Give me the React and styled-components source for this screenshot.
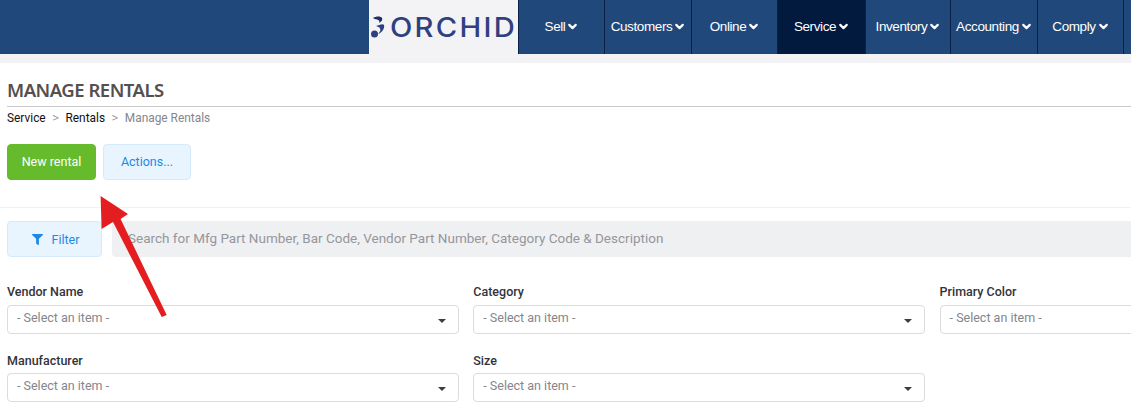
import React from 'react'
import styled, { createGlobalStyle } from 'styled-components'
import { FaFilter } from 'react-icons/fa'
import { ChevronDown } from 'lucide-react'

const GlobalStyle = createGlobalStyle`
  html, body {
    margin: 0;
    padding: 0;
    background: #fff;
    overflow: hidden;
    font-family: Roboto, "Liberation Sans", sans-serif;
  }
  * {
    box-sizing: border-box;
  }
`

const Page = styled.div`
  position: relative;
  width: 1131px;
  height: 419px;
  overflow: hidden;
`

const TopBar = styled.header`
  display: flex;
  height: 54px;
  padding-left: 369px;
  background: #21487a;
`

const LogoBox = styled.div`
  display: flex;
  align-items: center;
  width: 149px;
  padding-left: 2px;
  background: #f3f3f5;
`

const LogoText = styled.span`
  margin-left: -1px;
  font-family: Inter, "Liberation Sans", sans-serif;
  font-size: 27px;
  font-weight: 500;
  letter-spacing: 2.1px;
  color: #2f4080;
  transform: scaleX(1.08);
  transform-origin: left center;
`

const Nav = styled.nav`
  display: flex;
`

const NavItem = styled.div`
  display: flex;
  align-items: center;
  justify-content: center;
  gap: 1px;
  width: ${p => p.$width}px;
  padding: 0 0 2px 1px;
  border-left: 1px solid #0b2148;
  background: ${p => (p.$active ? '#011a3e' : 'transparent')};
  font-family: "Liberation Sans", sans-serif;
  font-size: 13.5px;
  letter-spacing: -0.4px;
  color: #fff;

  svg {
    width: 13px;
    height: 13px;
    stroke-width: 4;
  }
`

const Strip = styled.div`
  height: 9px;
  background: #f3f3f5;
`

const Content = styled.main`
  padding: 14px 0 0 7px;
`

const Title = styled.h1`
  margin: 0;
  height: 30px;
  border-bottom: 1px solid #c9c9c9;
  font-family: "Noto Sans", sans-serif;
  font-size: 18.5px;
  font-weight: 600;
  line-height: 25px;
  letter-spacing: -0.5px;
  color: #55504f;
`

const Crumbs = styled.div`
  display: flex;
  align-items: center;
  gap: 6.5px;
  height: 21px;
  font-size: 11.9px;
`

const Crumb = styled.span`
  color: ${p => (p.$current ? '#85858c' : '#111')};
`

const CrumbSep = styled.span`
  font-size: 13px;
  font-weight: 300;
  color: #8a8a8a;
`

const ButtonRow = styled.div`
  display: flex;
  gap: 7px;
  margin-top: 16px;
`

const Button = styled.div`
  display: flex;
  align-items: center;
  justify-content: center;
  gap: 9px;
  width: ${p => p.$width}px;
  height: 36px;
  padding: ${p => p.$pad};
  border: 1px solid ${p => (p.$primary ? '#65bb2b' : '#d5ebfc')};
  border-radius: 4px;
  background: ${p => (p.$primary ? '#65bb2b' : '#e9f5fe')};
  font-size: 12.5px;
  color: ${p => (p.$primary ? '#fff' : '#1e88e5')};

  svg {
    width: 11px;
    height: 11px;
  }
`

const Divider = styled.div`
  height: 1px;
  margin: 27px 0 13px -7px;
  background: #f2f2f4;
`

const SearchRow = styled.div`
  display: flex;
  gap: 10px;
`

const SearchBox = styled.div`
  display: flex;
  align-items: center;
  flex: 1;
  height: 36px;
  padding: 0 0 2px 16px;
  border-radius: 4px 0 0 4px;
  background: #eff0f2;
  font-size: 13.5px;
  color: #96969c;
`

const FilterGrid = styled.div`
  display: grid;
  grid-template-columns: 452px 452px 452px;
  column-gap: 14.3px;
  row-gap: 18px;
  margin-top: 26px;
`

const Field = styled.div`
  display: flex;
  flex-direction: column;
  gap: 5px;

  &:nth-child(n + 4) {
    gap: 4px;
  }
`

const Label = styled.label`
  height: 17px;
  font-size: 12.5px;
  font-weight: 500;
  line-height: 17px;
  color: #33333a;
`

const Select = styled.div`
  display: flex;
  align-items: center;
  justify-content: space-between;
  height: 29px;
  padding: 0 12px 5px 9px;
  border: 1px solid #dcdcdf;
  border-radius: 4px;
  background: #fff;
  font-size: 12.5px;
  color: #85858c;
`

const Caret = styled.span`
  width: 0;
  height: 0;
  margin-top: 8px;
  border-left: 4.5px solid transparent;
  border-right: 4.5px solid transparent;
  border-top: 4.5px solid #3d3d3d;
`

const Arrow = styled.svg`
  position: absolute;
  left: 95px;
  top: 190px;
`

const navItems = [
  ['Sell', 86],
  ['Customers', 87],
  ['Online', 86],
  ['Service', 88, true],
  ['Inventory', 85],
  ['Accounting', 87],
  ['Comply', 86],
  ['', 8],
]

const fields = ['Vendor Name', 'Category', 'Primary Color', 'Manufacturer', 'Size']

const OrchidMark = () => (
  <svg width="20" height="24" viewBox="0 0 20 24">
    <circle cx="3.5" cy="19" r="3.5" fill="#2f4080" />
    <path d="M2 3c3-2 8-2 9 0 1 2-1 4-3 5 1-2 0-3-2-3.500C4.500 4.200 3 4 2 3z" fill="#1f2f66" />
    <path d="M5 11c3-1 7-3 8-1 1 3-2 8-6 9 2-2 3-4 2-5.500C8.500 12 6.500 12 5 11z" fill="#2f4080" />
  </svg>
)

const App = () => (
  <Page>
    <GlobalStyle />
    <TopBar>
      <LogoBox>
        <OrchidMark />
        <LogoText>ORCHID</LogoText>
      </LogoBox>
      <Nav>
        {navItems.map(([name, width, active]) => (
          <NavItem key={width + name} $width={width} $active={active}>
            {name}
            {name && <ChevronDown />}
          </NavItem>
        ))}
      </Nav>
    </TopBar>
    <Strip />
    <Content>
      <Title>MANAGE RENTALS</Title>
      <Crumbs>
        <Crumb>Service</Crumb>
        <CrumbSep>&gt;</CrumbSep>
        <Crumb>Rentals</Crumb>
        <CrumbSep>&gt;</CrumbSep>
        <Crumb $current>Manage Rentals</Crumb>
      </Crumbs>
      <ButtonRow>
        <Button $primary $pad="0 0 2px" $width={89}>New rental</Button>
        <Button $pad="0 0 2px" $width={88}>Actions...</Button>
      </ButtonRow>
      <Divider />
      <SearchRow>
        <Button $pad="1px 0 0 2px" $width={95}><FaFilter />Filter</Button>
        <SearchBox>Search for Mfg Part Number, Bar Code, Vendor Part Number, Category Code &amp; Description</SearchBox>
      </SearchRow>
      <FilterGrid>
        {fields.map(name => (
          <Field key={name}>
            <Label>{name}</Label>
            <Select>
              - Select an item -
              <Caret />
            </Select>
          </Field>
        ))}
      </FilterGrid>
    </Content>
    <Arrow width="75" height="130" viewBox="0 0 75 130">
      <path d="M5.600 6 L33 24 L25.600 29 L71.700 125 L66.700 127 L18 32 L6.600 39 Z" fill="#e41e20" />
    </Arrow>
  </Page>
)

export default App
